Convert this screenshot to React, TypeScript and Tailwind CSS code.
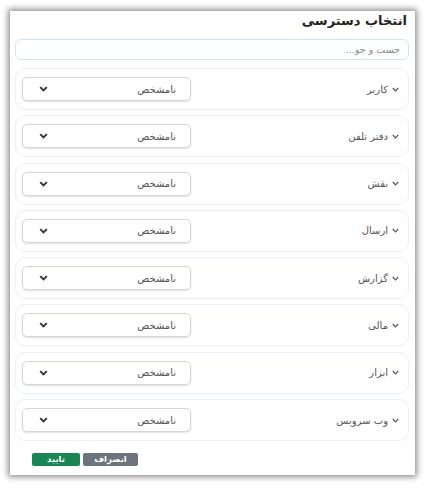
const rows = [
  "کاربر",
  "دفتر تلفن",
  "نقش",
  "ارسال",
  "گزارش",
  "مالی",
  "ابزار",
  "وب سرویس",
];

function SmallChevron() {
  return (
    <svg width="7" height="5" viewBox="0 0 7 5" className="shrink-0">
      <polyline
        points="0.8,1 3.5,3.8 6.2,1"
        fill="none"
        stroke="#555"
        strokeWidth="1.2"
      />
    </svg>
  );
}

function SelectChevron() {
  return (
    <svg width="9" height="6" viewBox="0 0 9 6" className="shrink-0">
      <polyline
        points="1.2,1.2 4.5,4.5 7.8,1.2"
        fill="none"
        stroke="#333"
        strokeWidth="1.9"
      />
    </svg>
  );
}

function PermissionRow({ label }: { label: string }) {
  return (
    <div className="h-[42px] flex items-center justify-between border border-[#e8f0f9] rounded-[10px] pr-[9px] pl-[6px]">
      <div className="flex items-center gap-[4px] text-[10px] text-[#555]">
        <SmallChevron />
        <span>{label}</span>
      </div>
      <div className="w-[169px] h-[24px] flex items-center justify-between pr-[14px] pl-[16px] bg-white border border-[#d6d6d6] rounded-[5px] shadow-[0_1px_2px_rgba(0,0,0,0.12)] text-[10px] text-[#555]">
        <span>نامشخص</span>
        <SelectChevron />
      </div>
    </div>
  );
}

export default function App() {
  return (
    <div
      className="w-[427px] h-[489px] bg-white pt-[11px] pl-[10px]"
      style={{ fontFamily: "'DejaVu Sans', 'Noto Sans', sans-serif" }}
    >
      <div
        dir="rtl"
        className="w-[405px] h-[464px] bg-white shadow-[0_0_6px_2px_rgba(0,0,0,0.45)] pr-[6px] pl-[5px] flex flex-col"
      >
        <h1 className="h-[20px] leading-[20px] text-[13px] font-bold text-[#222] pr-[2px]">
          انتخاب دسترسی
        </h1>

        <input
          type="text"
          placeholder="جست و جو..."
          className="mt-[8px] h-[21px] w-full border border-[#d3e3f4] rounded-[6px] px-[8px] text-[9.5px] text-[#555] placeholder:text-[#888] bg-white outline-none"
        />

        <div className="mt-[8px] flex flex-col gap-[5.3px]">
          {rows.map((r) => (
            <PermissionRow key={r} label={r} />
          ))}
        </div>

        <div dir="ltr" className="mt-[12px] flex gap-[3px] pl-[17px]">
          <button className="w-[48px] h-[13px] bg-[#198754] text-white text-[8.5px] font-bold leading-[13px] rounded-[2px]">
            تایید
          </button>
          <button className="w-[55px] h-[13px] bg-[#6c757d] text-white text-[8.5px] font-bold leading-[13px] rounded-[2px]">
            انصراف
          </button>
        </div>
      </div>
    </div>
  );
}
